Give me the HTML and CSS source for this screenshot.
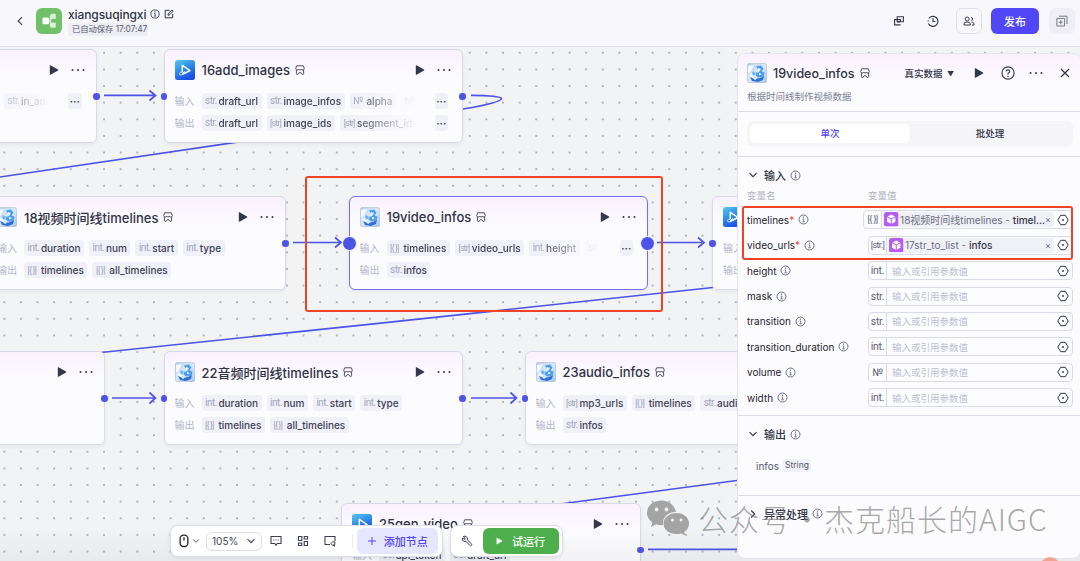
FILE: index.html
```html
<!DOCTYPE html>
<html lang="zh-CN">
<head>
    <meta charset="UTF-8">
    <meta name="viewport" content="width=device-width, initial-scale=1.0">
    <title>xiangsuqingxi</title>
    <link rel="stylesheet" href="styles.css">
</head>
<body>
    <!-- Icons -->
    <svg width="0" height="0" class="defs">
        <defs>
            <linearGradient id="g-play" x1="0" y1="0" x2="0.5" y2="1">
                <stop offset="0" stop-color="#5cc8ee"/><stop offset="0.5" stop-color="#2f8fe8"/><stop offset="1" stop-color="#1c4fe6"/>
            </linearGradient>
            <linearGradient id="g-art" x1="0" y1="0" x2="1" y2="1">
                <stop offset="0" stop-color="#b9cfe4"/><stop offset="0.5" stop-color="#d8eafb"/><stop offset="1" stop-color="#a9c4e8"/>
            </linearGradient>
        </defs>
        <symbol id="i-info" viewBox="0 0 12 12"><circle cx="6" cy="6" r="4.9" fill="none" stroke="currentColor"/><path d="M5 5.4h1.2v3M4.8 8.5h2.6" fill="none" stroke="currentColor" stroke-width=".9"/><circle cx="6" cy="3.5" r=".7" fill="currentColor"/></symbol>
        <symbol id="i-play" viewBox="0 0 10 10"><path d="M.8.6Q.8 0 1.5.3L9 4.5q.7.5 0 1L1.5 9.7q-.7.3-.7-.3z" fill="currentColor"/></symbol>
        <symbol id="i-more" viewBox="0 0 14 4"><circle cx="1.5" cy="2" r="1" fill="currentColor"/><circle cx="7" cy="2" r="1" fill="currentColor"/><circle cx="12.5" cy="2" r="1" fill="currentColor"/></symbol>
        <symbol id="i-shop" viewBox="0 0 10 10"><path d="M1.6.8h6.8l.9 2.8q0 1.4-1.4 1.4T6.5 4Q6 5 5 5T3.5 4Q3.200 5 2.100 5T.7 3.600zM1.400 5v3.700q0 .6.6.6h1.200l1-1.700h1.600l1 1.700H8q.6 0 .6-.6V5" fill="none" stroke="currentColor" stroke-width=".95"/></symbol>
        <symbol id="i-down" viewBox="0 0 10 10"><path d="M1.500 3.200 5 6.700l3.500-3.500" fill="none" stroke="currentColor" stroke-width="1.100"/></symbol>
        <symbol id="i-hex" viewBox="0 0 12 12"><path d="M3.700 1.300h4.600L11.200 6l-2.900 4.700H3.700L.8 6z" fill="none" stroke="currentColor" stroke-linejoin="round"/><circle cx="6" cy="6" r=".9" fill="currentColor"/></symbol>
        <symbol id="i-video" viewBox="0 0 20 20"><rect width="20" height="20" rx="2.500" fill="url(#g-play)"/><path d="M7.300 12V5.300l7.700 5.200-7.800 4" fill="none" stroke="#fff" stroke-width="1.500" stroke-linejoin="round"/><circle cx="6" cy="13.600" r="1.500" fill="none" stroke="#bfe6ff"/><path d="M7.500 13.200l2.500-1.700" stroke="#fff"/></symbol>
        <symbol id="i-art" viewBox="0 0 20 20"><rect width="20" height="20" rx="2.500" fill="url(#g-art)"/><path d="M1 3l6-1-3 6-3 3zM2 12l4-2 2 3-4 3z" fill="#f2f9ff"/><path d="M9 3.500l5-1 2.500 3-2 3 3 1-1 4-5 1-3-2 1-3 2-2z" fill="#4a9df0"/><path d="M11 5l3 1-2 3-2 1z" fill="#e9f6ff"/><path d="M3 14l5 2 5-1 4-2-1 4-5 2-6-1z" fill="#2f6fd8"/><path d="M6 15l4 .5-2 1.500zM12 10l3 1-3 1.500z" fill="#fff"/><path d="M6 8l3 2-2 3-2-2z" fill="#69b4f5"/><rect x=".4" y=".4" width="19.200" height="19.200" rx="2.500" fill="none" stroke="#b7c3d6" stroke-width=".6"/></symbol>
        <symbol id="i-cube" viewBox="0 0 14 14"><rect width="14" height="14" rx="2.500" fill="#b65cf5"/><path d="M7 2.400l3.600 1.900L7 6.200 3.400 4.300zM3 5.100l3.500 1.900v4.400L3 9.400zM11 5.100L7.500 7v4.400L11 9.400z" fill="#fff"/></symbol>
    </svg>

    <!-- Header -->
    <header class="topbar">
        <svg class="back" viewBox="0 0 8 10"><path d="M6 1.200 2.200 5 6 8.800" fill="none" stroke="#41465a" stroke-width="1.200"/></svg>
        <svg class="logo" viewBox="0 0 26 26"><rect width="26" height="26" rx="6" fill="#70c168"/><path d="M11 13h3.500M14.500 7.500v11M14.500 8H17M14.500 18H17" stroke="#d9f0d6" stroke-width="1.300" fill="none"/><rect x="6.500" y="9.500" width="6.500" height="6.700" rx="1.300" fill="#fff"/><rect x="14.500" y="5.800" width="5.300" height="5.300" rx="1.200" fill="#d9f0d6"/><rect x="14.500" y="14.400" width="5.300" height="5.300" rx="1.200" fill="#d9f0d6"/></svg>
        <div class="project">
            <div class="project-name">
                <span>xiangsuqingxi</span>
                <svg class="s10"><use href="#i-info"/></svg>
                <svg class="s10" viewBox="0 0 10 10"><path d="M5.500 1.300H1.200v7.500h7.500V5M4 6.200V4.900L8 1l1.200 1.200-4 4z" fill="none" stroke="currentColor"/></svg>
            </div>
            <span class="saved">已自动保存 17:07:47</span>
        </div>
        <div class="top-actions">
            <svg class="s12" viewBox="0 0 12 12"><path d="M4.200 1.700h6.200v5.100H4.200zM7.500 9.900H1.600V4.600h5.900v2.600" fill="none" stroke="currentColor" stroke-width="1.100"/><path d="M4 7h3" stroke="currentColor"/></svg>
            <svg class="s12 history" viewBox="0 0 12 12"><path d="M1.800 3.500A5 5 0 1 1 1.400 8.500M1.200 5.500v1M6 3.300v3.200h2.500" fill="none" stroke="currentColor" stroke-width="1.200"/></svg>
            <span class="box-btn"><svg class="s12" viewBox="0 0 12 12"><circle cx="4.200" cy="4" r="2" fill="none" stroke="currentColor"/><path d="M1 10V9q0-2 3.200-2t3.200 2v1zM8 2.500q1.700 0 1.700 1.500T8.200 5.500M8.500 7q2.500.2 2.500 2v1H9" fill="none" stroke="currentColor"/></svg></span>
            <button class="publish">发布</button>
            <span class="gray-btn"><svg class="s12" viewBox="0 0 12 12"><path d="M.9 3.400h7.700V11H.9zM3 1.200h8V9M4.750 5.200v4M2.750 7.200h4" fill="none" stroke="currentColor"/></svg></span>
        </div>
    </header>

    <!-- Canvas -->
    <main class="canvas">
        <svg class="edges" width="1080" height="514" viewBox="0 47 1080 514">
            <g fill="none" stroke="#4d53e8" stroke-width="1.700">
                <path d="M471 95.300C492 95.500 501 96.500 501.500 98.500C501.500 102 484 105.500 463 109"/>
                <path d="M463 109L0 177"/>
                <path d="M713 287.500C520 307 300 333 101 352.500"/>
                <path d="M737 480.500L560 504"/>
                <path d="M104 95.300h50M149.500 90.500l6 5-6 5"/>
                <path d="M293 242.500h47M335 237.500l6 5-6 5"/>
                <path d="M657 242.500h45M698 237.500l6 5-6 5"/>
                <path d="M112 398h42M149.500 392.500l6 5.500-6 5.500"/>
                <path d="M471 398h44M510.500 392.500l6 5.500-6 5.500"/>
                <path d="M648 549.300h92"/>
            </g>
        </svg>

        <section class="node" style="left:-203px; top:2px">
            <div class="node-head"><h3></h3><svg class="play"><use href="#i-play"/></svg><svg class="more"><use href="#i-more"/></svg></div>
            <div class="row"><label></label><div class="chips fade"><i class="spacer"></i><span class="chip"><em>str.</em>in_animation</span></div><b class="rest">···</b></div>
            <i class="port out"></i>
        </section>

        <section class="node" style="left:163.500px; top:2px">
            <div class="node-head"><svg class="icon"><use href="#i-video"/></svg><h3>16add_images</h3><svg class="shop"><use href="#i-shop"/></svg><svg class="play"><use href="#i-play"/></svg><svg class="more"><use href="#i-more"/></svg></div>
            <div class="row"><label>输入</label><div class="chips fade"><span class="chip"><em>str.</em>draft_url</span><span class="chip"><em>str.</em>image_infos</span><span class="chip"><em>№</em>alpha</span><span class="chip"><em>№</em>scale</span></div><b class="rest">···</b></div>
            <div class="row"><label>输出</label><div class="chips fade"><span class="chip"><em>str.</em>draft_url</span><span class="chip"><em class="t">[str]</em>image_ids</span><span class="chip"><em class="t">[str]</em>segment_ids</span></div><b class="rest">···</b></div>
            <i class="port in"></i><i class="port out"></i>
        </section>

        <section class="node" style="left:-14px; top:149px">
            <div class="node-head"><svg class="icon"><use href="#i-art"/></svg><h3>18视频时间线timelines</h3><svg class="shop"><use href="#i-shop"/></svg><svg class="play"><use href="#i-play"/></svg><svg class="more"><use href="#i-more"/></svg></div>
            <div class="row"><label>输入</label><div class="chips"><span class="chip"><em>int.</em>duration</span><span class="chip"><em>int.</em>num</span><span class="chip"><em>int.</em>start</span><span class="chip"><em>int.</em>type</span></div></div>
            <div class="row"><label>输出</label><div class="chips"><span class="chip"><em class="t">[{ }]</em>timelines</span><span class="chip"><em class="t">[{ }]</em>all_timelines</span></div></div>
            <i class="port out"></i>
        </section>

        <section class="node selected" style="left:348.500px; top:149px">
            <div class="node-head"><svg class="icon"><use href="#i-art"/></svg><h3>19video_infos</h3><svg class="shop"><use href="#i-shop"/></svg><svg class="play"><use href="#i-play"/></svg><svg class="more"><use href="#i-more"/></svg></div>
            <div class="row"><label>输入</label><div class="chips fade"><span class="chip"><em class="t">[{ }]</em>timelines</span><span class="chip"><em class="t">[str]</em>video_urls</span><span class="chip"><em>int.</em>height</span><span class="chip"><em>str.</em>mask</span></div><b class="rest">···</b></div>
            <div class="row"><label>输出</label><div class="chips"><span class="chip"><em>str.</em>infos</span></div></div>
            <i class="port in"></i><i class="port out"></i>
        </section>

        <section class="node" style="left:712px; top:149px">
            <div class="node-head"><svg class="icon"><use href="#i-video"/></svg><h3></h3></div>
            <div class="row"><label>输入</label></div>
            <div class="row"><label>输出</label></div>
            <i class="port in"></i>
        </section>

        <section class="node" style="left:-195px; top:304px">
            <div class="node-head"><h3></h3><svg class="play"><use href="#i-play"/></svg><svg class="more"><use href="#i-more"/></svg></div>
            <i class="port out"></i>
        </section>

        <section class="node" style="left:163.500px; top:304px">
            <div class="node-head"><svg class="icon"><use href="#i-art"/></svg><h3>22音频时间线timelines</h3><svg class="shop"><use href="#i-shop"/></svg><svg class="play"><use href="#i-play"/></svg><svg class="more"><use href="#i-more"/></svg></div>
            <div class="row"><label>输入</label><div class="chips"><span class="chip"><em>int.</em>duration</span><span class="chip"><em>int.</em>num</span><span class="chip"><em>int.</em>start</span><span class="chip"><em>int.</em>type</span></div></div>
            <div class="row"><label>输出</label><div class="chips"><span class="chip"><em class="t">[{ }]</em>timelines</span><span class="chip"><em class="t">[{ }]</em>all_timelines</span></div></div>
            <i class="port in"></i><i class="port out"></i>
        </section>

        <section class="node" style="left:524.500px; top:304px">
            <div class="node-head"><svg class="icon"><use href="#i-art"/></svg><h3>23audio_infos</h3><svg class="shop"><use href="#i-shop"/></svg></div>
            <div class="row"><label>输入</label><div class="chips"><span class="chip"><em class="t">[str]</em>mp3_urls</span><span class="chip"><em class="t">[{ }]</em>timelines</span><span class="chip"><em>str.</em>audio_effect</span></div></div>
            <div class="row"><label>输出</label><div class="chips"><span class="chip"><em>str.</em>infos</span></div></div>
            <i class="port in"></i>
        </section>

        <section class="node" style="left:341px; top:455.500px">
            <div class="node-head"><svg class="icon"><use href="#i-video"/></svg><h3>25gen_video</h3><svg class="shop"><use href="#i-shop"/></svg><svg class="play"><use href="#i-play"/></svg><svg class="more"><use href="#i-more"/></svg></div>
            <div class="row"><label>输入</label><div class="chips"><span class="chip"><em>str.</em>api_token</span><span class="chip"><em>str.</em>draft_url</span></div></div>
            <i class="port out"></i>
        </section>

        <div class="mark mark-node"></div>
        <div class="shade"></div>

        <!-- Bottom toolbar -->
        <div class="tools">
            <div class="toolbar">
                <svg class="mouse" viewBox="0 0 10 14"><rect x="1.100" y="1.100" width="7.800" height="11.400" rx="3.600" fill="none" stroke="#222" stroke-width="1.300"/><path d="M5 3.200v3.200" stroke="#222" stroke-width="1.300"/></svg>
                <svg class="caret"><use href="#i-down"/></svg>
                <span class="zoom">105%<svg class="s10"><use href="#i-down"/></svg></span>
                <svg class="s12" viewBox="0 0 12 12"><path d="M1 1.500h10v7H7.200L6 10.200 4.800 8.500H1z" fill="none" stroke="currentColor" stroke-width="1.100"/><path d="M3.300 5h1M5.500 5h1M7.700 5h1" stroke="currentColor" stroke-width="1.200"/></svg>
                <svg class="s12" viewBox="0 0 12 12"><path d="M1.500 1.500h3.300v4H1.500zM7.200 1.500h3.300v2.500H7.200zM1.500 8h3.300v2.500H1.500zM7.200 6.500h3.300v4H7.200z" fill="none" stroke="currentColor" stroke-width="1.100"/></svg>
                <svg class="s12" viewBox="0 0 12 12"><path d="M6 9.500H1v-8h10v4.500" fill="none" stroke="currentColor" stroke-width="1.100"/><path d="M6.800 8.500q1.700-2.500 4.200-1.500l-.5 3.500q-2 .8-3.700-2zM9.500 9.500l1 2" fill="none" stroke="currentColor"/></svg>
                <i class="sep"></i>
                <button class="add"><svg class="s10" viewBox="0 0 10 10"><path d="M5 1v8M1 5h8" stroke="currentColor" fill="none"/></svg>添加节点</button>
            </div>
            <div class="toolbar run-bar">
                <svg class="s12" viewBox="0 0 12 12"><path d="M2.200 1.500l1.800 1.800.2 1-1 .1L1.500 3Q.8 5.300 2.500 6.200T5 6.300l3.600 3.900q1 .9 1.800.1t-.1-1.700L6.300 5Q7 3 5.500 1.800T2.200 1.500z" fill="none" stroke="currentColor"/></svg>
                <button class="run"><svg class="run-icon"><use href="#i-play"/></svg>试运行</button>
            </div>
        </div>

        <!-- Node settings -->
        <aside class="panel">
            <div class="panel-head">
                <div class="panel-title">
                    <svg class="icon"><use href="#i-art"/></svg>
                    <h3>19video_infos</h3>
                    <svg class="shop"><use href="#i-shop"/></svg>
                    <span class="source">真实数据 <small>▼</small></span>
                    <svg class="play"><use href="#i-play"/></svg>
                    <svg class="help" viewBox="0 0 14 14"><circle cx="7" cy="7" r="6.100" fill="none" stroke="currentColor" stroke-width="1.100"/><path d="M5.200 5.600q0-1.700 1.800-1.700t1.800 1.500Q8.800 6.700 7 7.300V8.400" fill="none" stroke="currentColor" stroke-width="1.100"/><circle cx="7" cy="10.200" r=".8" fill="currentColor"/></svg>
                    <svg class="more"><use href="#i-more"/></svg>
                    <svg class="s10 close" viewBox="0 0 10 10"><path d="M1 1l8 8M9 1L1 9" stroke="currentColor" stroke-width="1.200"/></svg>
                </div>
                <p>根据时间线制作视频数据</p>
            </div>
            <div class="tabs"><div class="tab active">单次</div><div class="tab">批处理</div></div>
            <div class="group inputs">
                <h4><svg class="s10"><use href="#i-down"/></svg>输入<svg class="info"><use href="#i-info"/></svg></h4>
                <div class="cols"><span>变量名</span><span>变量值</span></div>
                <div class="param"><div class="name">timelines<u>*</u><svg class="info"><use href="#i-info"/></svg></div><div class="field"><em class="t">[{ }]</em><span class="ref"><svg class="cube"><use href="#i-cube"/></svg><span>18视频时间线timelines - <b>timel...</b></span><s>×</s></span><svg class="hex"><use href="#i-hex"/></svg></div></div>
                <div class="param"><div class="name">video_urls<u>*</u><svg class="info"><use href="#i-info"/></svg></div><div class="field"><em class="t">[str.]</em><span class="ref"><svg class="cube"><use href="#i-cube"/></svg><span>17str_to_list - <b>infos</b></span><s>×</s></span><svg class="hex"><use href="#i-hex"/></svg></div></div>
                <div class="param"><div class="name">height<svg class="info"><use href="#i-info"/></svg></div><div class="field"><em>int.</em><span class="hint">输入或引用参数值</span><svg class="hex"><use href="#i-hex"/></svg></div></div>
                <div class="param"><div class="name">mask<svg class="info"><use href="#i-info"/></svg></div><div class="field"><em>str.</em><span class="hint">输入或引用参数值</span><svg class="hex"><use href="#i-hex"/></svg></div></div>
                <div class="param"><div class="name">transition<svg class="info"><use href="#i-info"/></svg></div><div class="field"><em>str.</em><span class="hint">输入或引用参数值</span><svg class="hex"><use href="#i-hex"/></svg></div></div>
                <div class="param"><div class="name">transition_duration<svg class="info"><use href="#i-info"/></svg></div><div class="field"><em>int.</em><span class="hint">输入或引用参数值</span><svg class="hex"><use href="#i-hex"/></svg></div></div>
                <div class="param"><div class="name">volume<svg class="info"><use href="#i-info"/></svg></div><div class="field"><em>№</em><span class="hint">输入或引用参数值</span><svg class="hex"><use href="#i-hex"/></svg></div></div>
                <div class="param"><div class="name">width<svg class="info"><use href="#i-info"/></svg></div><div class="field"><em>int.</em><span class="hint">输入或引用参数值</span><svg class="hex"><use href="#i-hex"/></svg></div></div>
            </div>
            <div class="group outputs">
                <h4><svg class="s10"><use href="#i-down"/></svg>输出<svg class="info"><use href="#i-info"/></svg></h4>
                <div class="output">infos<span>String</span></div>
            </div>
            <div class="group errors">
                <h4><svg class="s10 closed"><use href="#i-down"/></svg>异常处理<svg class="info"><use href="#i-info"/></svg></h4>
            </div>
        </aside>

        <div class="mark mark-params"></div>
        <div class="bubble"></div>

        <div class="watermark">
            <svg viewBox="0 0 44 36"><path d="M15.500.5C7 .5 1 6 1 13c0 4 2 7 5.300 9.500L5 27l5-2.700q3.500 1 7 .8C16 17 23 11 30 12 28.500 5 22.500.5 15.500.5z" fill="#a4a4a4"/><path d="M30.500 13C23 13 17.500 18 17.500 23.700S23 34 30.500 34q2.500 0 4.500-.6l4.200 2-1-3.500Q43 28.500 43 23.700C43 18 38 13 30.500 13z" fill="#a4a4a4"/><g fill="#f2f2f4"><circle cx="10.500" cy="9.500" r="1.900"/><circle cx="20.500" cy="9.500" r="1.900"/><circle cx="26.500" cy="20" r="1.500"/><circle cx="35" cy="20" r="1.500"/></g></svg>
            <span>公众号</span><span class="dot">·</span><span>杰克船长的AIGC</span>
        </div>
    </main>
</body>
</html>
```
FILE: styles.css
```css
/* Base */
* {
    box-sizing: border-box;
}
body {
    margin: 0;
    width: 1080px;
    height: 561px;
    overflow: hidden;
    font-family: Inter, "Noto Sans CJK SC", sans-serif;
    font-size: 10px;
    color: #2f3347;
    background: #f2f3f5;
}
h3, h4, p {
    margin: 0;
}
em, i, u, s {
    font-style: normal;
    text-decoration: none;
}
svg {
    display: block;
    flex: none;
}
.defs {
    position: absolute;
}
button {
    border: 0;
    padding: 0;
    font: inherit;
}
.s10 {
    width: 10px;
    height: 10px;
}
.s12 {
    width: 12px;
    height: 12px;
}
.icon {
    width: 20px;
    height: 20px;
}
.shop {
    width: 10px;
    height: 10px;
    margin-left: 5px;
    color: #454a5e;
}
.play {
    width: 10px;
    height: 10px;
}
.more {
    width: 14px;
    height: 4px;
}

/* Header */
.topbar {
    display: flex;
    align-items: center;
    height: 47px;
    padding: 0 5px 5px 16px;
    background: #f7f7fc;
    border-bottom: 1px solid #dfe1ea;
}
.back {
    width: 8px;
    height: 10px;
}
.logo {
    width: 26px;
    height: 26px;
    margin: 0 6px 0 12px;
}
.project {
    margin-top: 1px;
}
.project-name {
    display: flex;
    align-items: center;
    height: 15px;
    font-size: 12px;
    font-weight: 500;
    letter-spacing: -0.1px;
}
.project-name svg {
    margin-left: 4px;
}
.saved {
    display: block;
    width: 80px;
    height: 13px;
    margin-top: 1px;
    padding-left: 4px;
    line-height: 13px;
    font-size: 8.400px;
    letter-spacing: -0.1px;
    white-space: nowrap;
    color: #55596d;
    background: #ededf4;
    border-radius: 3px;
}
.top-actions {
    display: flex;
    align-items: center;
    margin-left: auto;
    color: #363b50;
}
.history {
    margin: 0 17px 0 22px;
}
.box-btn, .gray-btn {
    display: flex;
    align-items: center;
    justify-content: center;
    width: 26px;
    height: 26px;
    border-radius: 6px;
}
.box-btn {
    border: 1px solid #e0e0ea;
}
.gray-btn {
    background: #eeeef4;
    color: #777b88;
}
.publish {
    width: 48px;
    height: 26px;
    margin: 0 10px 0 9px;
    border-radius: 6px;
    background: #5147f7;
    color: #fff;
    font-size: 11px;
    font-weight: 500;
}

/* Canvas */
.canvas {
    position: relative;
    height: 514px;
    overflow: hidden;
    background-color: #f2f3f5;
    background-image: radial-gradient(circle at 1px 1px, #b0b3b9 0.700px, transparent 1px);
    background-size: 16.640px 16.640px;
    background-position: 3.300px 4.800px;
}
.edges {
    position: absolute;
    left: 0;
    top: 0;
}
.node {
    position: absolute;
    width: 299.500px;
    height: 93.500px;
    padding: 10px 10px 0 10px;
    border: 1px solid #d9dae8;
    border-radius: 6px;
    background: linear-gradient(#f9f1fe, #fcfcff 30px);
    box-shadow: 0 2px 4px rgba(0, 0, 0, 0.050);
}
.node.selected {
    border-color: #7470f5;
}
.node-head {
    display: flex;
    align-items: center;
    height: 20px;
    margin-bottom: 13px;
    color: #33384b;
}
.node h3, .panel h3 {
    font-size: 13px;
    font-weight: 500;
    white-space: nowrap;
    color: #2f3345;
}
.node h3 {
    margin-left: 7px;
}
.node .play {
    margin-left: auto;
    margin-right: 12px;
}
.node .more {
    margin-right: 1px;
}
.row {
    display: flex;
    height: 16px;
    margin-bottom: 5.600px;
    line-height: 16px;
}
.row label {
    flex: none;
    width: 27px;
    color: #b2b5c7;
}
.chips {
    display: flex;
    gap: 5px;
    flex: 1;
    white-space: nowrap;
}
.fade {
    flex: none;
    width: 218px;
    overflow: hidden;
    -webkit-mask-image: linear-gradient(90deg, #000 150px, transparent 215px);
    mask-image: linear-gradient(90deg, #000 150px, transparent 215px);
}
.chip {
    display: flex;
    flex: none;
    padding: 0 3.500px;
    border-radius: 3px;
    font-weight: 500;
    color: #3e4255;
    background: #f0f0f8;
}
.chip em {
    flex: none;
    width: 13.400px;
    font-family: Roboto, sans-serif;
    font-weight: 400;
    letter-spacing: -0.500px;
    color: #a3a7bb;
}
.chip .t {
    font-size: 9px;
    letter-spacing: -0.900px;
}
.spacer {
    flex: none;
    width: 164px;
}
.rest {
    width: 13.500px;
    margin-left: 15px;
    border-radius: 3px;
    text-align: center;
    background: #f0f0f8;
    color: #3e4255;
}
.port {
    position: absolute;
    top: 43px;
    width: 6.600px;
    height: 6.600px;
    border-radius: 50%;
    background: #4d53e8;
}
.in {
    left: -4px;
}
.out {
    right: -4px;
}
.selected .port {
    top: 39px;
    width: 15px;
    height: 15px;
    border: 1.700px solid #fff;
}
.selected .in {
    left: -8px;
}
.selected .out {
    right: -8px;
}

/* Red frames */
.mark {
    position: absolute;
    border: 2px solid #ef4328;
    border-radius: 3px;
}
.mark-node {
    left: 305px;
    top: 129px;
    width: 358px;
    height: 136px;
}
.mark-params {
    left: 742px;
    top: 159px;
    width: 331px;
    height: 54px;
}
.shade {
    position: absolute;
    left: 0;
    right: 0;
    bottom: 0;
    height: 34px;
    background: linear-gradient(rgba(0, 0, 0, 0), rgba(0, 0, 0, 0.040));
}

/* Toolbar */
.tools {
    position: absolute;
    left: 170px;
    top: 478px;
    display: flex;
    gap: 7px;
}
.toolbar {
    display: flex;
    align-items: center;
    width: 272.500px;
    height: 32px;
    padding: 0 4px 0 8px;
    border: 1px solid #dedfe8;
    border-radius: 8px;
    background: #fff;
    color: #3a3f52;
    box-shadow: 0 1px 4px rgba(0, 0, 0, 0.080);
}
.mouse {
    width: 10px;
    height: 14px;
}
.caret {
    width: 8px;
    height: 8px;
    margin: 0 6px 0 3px;
}
.zoom {
    display: flex;
    align-items: center;
    justify-content: space-between;
    width: 56px;
    height: 19px;
    margin-right: 8px;
    padding: 0 5px;
    border: 1px solid #dcdde9;
    border-radius: 6px;
}
.toolbar > .s12 {
    margin-right: 15px;
}
.sep {
    width: 1px;
    height: 14px;
    margin: 0 4px 0 1px;
    background: #e9eaf0;
}
.add {
    display: flex;
    align-items: center;
    justify-content: center;
    gap: 7px;
    flex: 1;
    height: 26px;
    border-radius: 6px;
    background: #e6e6fe;
    color: #5147f5;
    font-size: 11px;
    font-weight: 500;
}
.run-bar {
    width: 113px;
    padding: 0 3px 0 10px;
}
.run-bar > .s12 {
    margin-right: 10px;
}
.run {
    display: flex;
    align-items: center;
    justify-content: center;
    gap: 9px;
    flex: 1;
    height: 26px;
    border-radius: 6px;
    background: #4caf4c;
    color: #fff;
    font-size: 11px;
    font-weight: 500;
}
.run-icon {
    width: 7px;
    height: 8px;
}

/* Side panel */
.panel {
    position: absolute;
    left: 737px;
    top: 6px;
    width: 343px;
    height: 506px;
    border: 1px solid #e6e3f0;
    border-right: 0;
    border-radius: 8px;
    background: #fcfcff;
}
.panel-head {
    height: 58px;
    padding: 9px 0 0 9px;
    border-bottom: 1px solid #dcdde9;
    border-radius: 8px 8px 0 0;
    background: linear-gradient(#faf1fe, #fcfcff 30px);
}
.panel-title {
    display: flex;
    align-items: center;
    height: 20px;
    color: #33384b;
}
.panel h3 {
    margin-left: 6px;
    font-size: 12.500px;
}
.source {
    width: 50px;
    margin: 0 19px 0 35px;
    font-size: 9.500px;
    font-weight: 500;
    white-space: nowrap;
}
.source small {
    font-size: 7px;
    margin-left: 2px;
}
.help {
    width: 14px;
    height: 14px;
    margin: 0 14px 0 17px;
}
.close {
    margin-left: 17px;
}
.panel-head p {
    margin-top: 7px;
    font-size: 9.500px;
    line-height: 14px;
    color: #7b7f93;
}
.tabs {
    display: flex;
    height: 25px;
    margin: 9px 7px 0 9px;
    padding: 3px;
    border-radius: 6px;
    background: #f5f5f8;
}
.tab {
    flex: 1;
    border-radius: 5px;
    text-align: center;
    line-height: 19px;
    font-size: 9.500px;
    font-weight: 500;
}
.tab.active {
    background: #fff;
    color: #5147f5;
}
.inputs {
    height: 259px;
    margin-top: 10px;
}
.group {
    border-top: 1px solid #dcdde9;
}
.group h4 {
    display: flex;
    align-items: center;
    height: 14px;
    margin-top: 11px;
    padding-left: 10px;
    font-size: 11px;
    font-weight: 500;
}
.group h4 svg:first-child {
    margin-right: 6px;
}
.info {
    width: 11px;
    height: 11px;
    margin-left: 4px;
    color: #5f6377;
}
.cols {
    display: flex;
    padding-left: 9px;
    margin: 6px 0 3px;
    font-size: 9.500px;
    line-height: 16px;
    color: #b0b3be;
}
.cols span {
    width: 121px;
}
.param {
    display: flex;
    align-items: center;
    height: 25.450px;
    padding: 0 7px 0 9px;
}
.name {
    display: flex;
    align-items: center;
    width: 121px;
    font-weight: 400;
    color: #1f2230;
}
.name u {
    color: #f0413c;
}
.field {
    display: flex;
    align-items: center;
    flex: 1;
    height: 19px;
    border: 1px solid #d9dbe8;
    border-radius: 4px;
    background: #fdfdff;
}
.field em {
    width: 18px;
    border-right: 1px solid #d9dbe8;
    line-height: 17px;
    text-align: center;
    font-family: Roboto, sans-serif;
    font-size: 10.500px;
    letter-spacing: -0.300px;
    color: #5d6178;
}
.field .t {
    font-size: 9px;
    letter-spacing: -0.600px;
}
.ref {
    display: flex;
    align-items: center;
    flex: 1;
    height: 15px;
    margin: 0 3px 0 2px;
    padding-right: 3px;
    border-radius: 3px;
    background: #f0f0f7;
    white-space: nowrap;
    color: #6a6e82;
}
.ref b {
    font-weight: 500;
    color: #34384a;
}
.ref s {
    margin-left: auto;
    font-size: 9px;
}
.cube {
    width: 14.500px;
    height: 14.500px;
    margin-right: 1.500px;
}
.hint {
    flex: 1;
    padding-left: 5px;
    font-size: 9.500px;
    color: #bcbfd0;
}
.hex {
    width: 12px;
    height: 12px;
    margin-right: 3px;
}
.outputs {
    height: 79.500px;
}
.output {
    display: flex;
    align-items: center;
    margin: 18px 0 0 18px;
    color: #55596d;
}
.output span {
    height: 13px;
    margin-left: 4px;
    padding: 0 2px;
    border-radius: 3px;
    line-height: 13px;
    font-size: 8.500px;
    background: #f0f0f7;
}
.closed {
    transform: rotate(-90deg);
}

/* Overlay */
.bubble {
    position: absolute;
    left: 1040px;
    top: 510px;
    width: 20px;
    height: 20px;
    border-radius: 50%;
    background: #f3a491;
}
.watermark {
    position: absolute;
    left: 646px;
    top: 451px;
    display: flex;
    align-items: center;
    height: 40px;
    font-size: 30px;
    font-weight: 300;
    letter-spacing: 1px;
    font-family: "Noto Sans CJK SC", sans-serif;
    color: rgba(110, 110, 110, 0.600);
    white-space: nowrap;
}
.watermark svg {
    width: 44px;
    height: 36px;
    margin-right: 8px;
}
.watermark .dot {
    width: 33px;
    text-align: center;
}
```
